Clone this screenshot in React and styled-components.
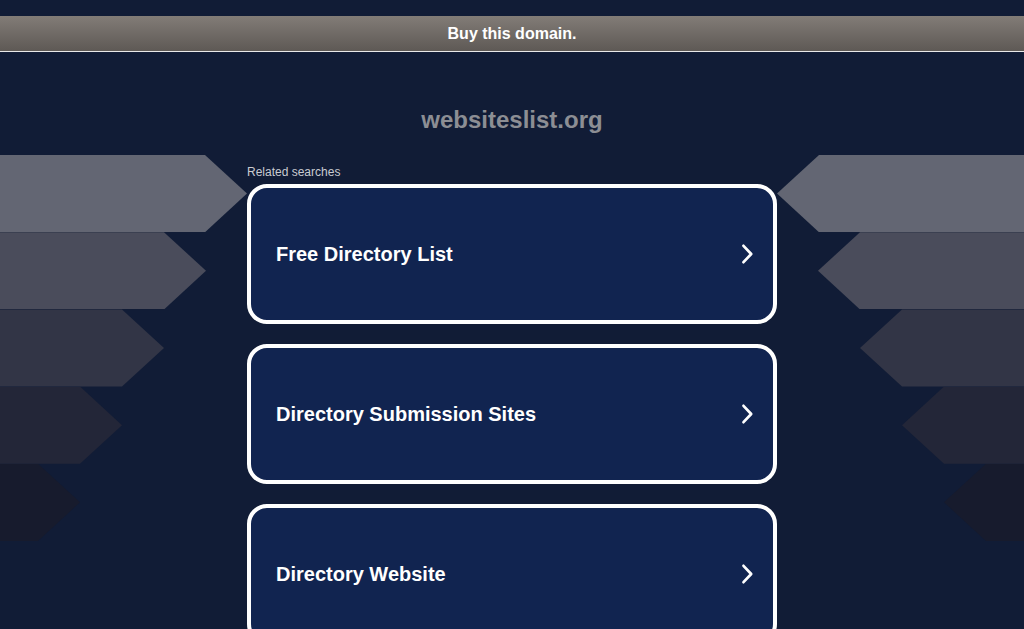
import React from "react";
import styled, { createGlobalStyle } from "styled-components";

const GlobalStyle = createGlobalStyle`
  html, body {
    margin: 0;
    padding: 0;
    background: #111c36;
    font-family: "Liberation Sans", Arial, sans-serif;
    overflow: hidden;
  }
`;

const searches = [
  "Free Directory List",
  "Directory Submission Sites",
  "Directory Website",
];

const bands = [
  { width: 247, color: "#636673" },
  { width: 206, color: "#4a4c5b" },
  { width: 164, color: "#323546" },
  { width: 122, color: "#232638" },
  { width: 80, color: "#171b2d" },
];

const Chevron = () => (
  <svg width="20" height="24" viewBox="0 0 20 24" fill="none">
    <path
      d="M5.5 3.8 L13.2 12 L5.5 20.2"
      stroke="#fff"
      strokeWidth="2.7"
      strokeLinecap="round"
      strokeLinejoin="round"
    />
  </svg>
);

const App = () => {
  return (
    <>
      <GlobalStyle />
      <StylePage>
        <StyleBanner>Buy this domain.</StyleBanner>
        <StyleTitle>websiteslist.org</StyleTitle>
        <StyleBody>
          <StyleWings>
            {bands.map((b, i) => (
              <StyleBand key={i} side="left" color={b.color} style={{ width: b.width }} />
            ))}
          </StyleWings>
          <StyleCenter>
            <StyleLabel>Related searches</StyleLabel>
            {searches.map((s) => (
              <StyleCard key={s} href="#">
                <span>{s}</span>
                <Chevron />
              </StyleCard>
            ))}
          </StyleCenter>
          <StyleWings align="right">
            {bands.map((b, i) => (
              <StyleBand key={i} side="right" color={b.color} style={{ width: b.width }} />
            ))}
          </StyleWings>
        </StyleBody>
      </StylePage>
    </>
  );
};

//Styled component
const StylePage = styled.div`
  height: 629px;
  padding-top: 16px;
  box-sizing: border-box;
  background: #111c36;
`;

const StyleBanner = styled.div`
  height: 35px;
  border-bottom: 1px solid #e8e8e8;
  background: linear-gradient(#827c77, #5e5955);
  color: #ffffff;
  font-size: 16px;
  font-weight: bold;
  display: flex;
  align-items: center;
  justify-content: center;
`;

const StyleTitle = styled.h1`
  margin: 54px 0 21px;
  font-size: 24px;
  line-height: 28px;
  font-weight: bold;
  color: #8c8e94;
  text-align: center;
`;

const StyleBody = styled.div`
  display: grid;
  grid-template-columns: 247px 530px 247px;
`;

const StyleWings = styled.div`
  display: flex;
  flex-direction: column;
  align-items: ${(p) => (p.align === "right" ? "flex-end" : "flex-start")};
`;

const StyleBand = styled.div`
  height: 77.2px;
  background: ${(p) => p.color};
  clip-path: ${(p) =>
    p.side === "left"
      ? "polygon(0 0, calc(100% - 42px) 0, 100% 50%, calc(100% - 42px) 100%, 0 100%)"
      : "polygon(42px 0, 100% 0, 100% 100%, 42px 100%, 0 50%)"};
`;

const StyleCenter = styled.div`
  display: flex;
  flex-direction: column;
  gap: 20px;
`;

const StyleLabel = styled.div`
  font-size: 12px;
  line-height: 14px;
  color: #c9cbd1;
  padding-top: 10px;
  margin-bottom: -15px;
`;

const StyleCard = styled.a`
  height: 140px;
  flex-shrink: 0;
  box-sizing: border-box;
  border: 4px solid #ffffff;
  border-radius: 20px;
  background: #112450;
  display: flex;
  align-items: center;
  justify-content: space-between;
  padding: 0 15px 0 25px;
  color: #ffffff;
  text-decoration: none;
  font-size: 20px;
  font-weight: bold;
`;

export default App;
